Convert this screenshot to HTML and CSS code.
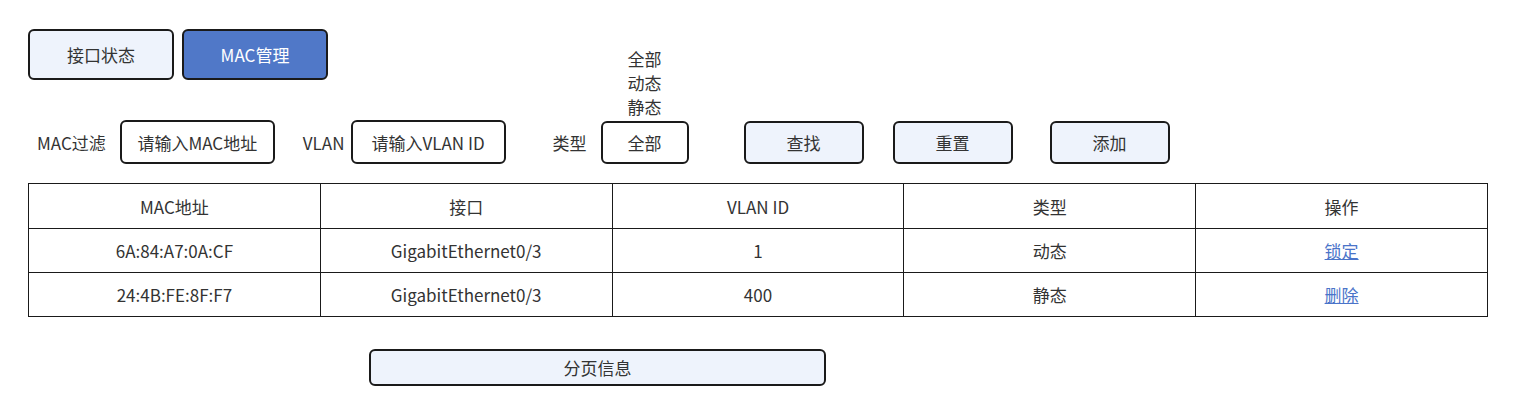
FILE: index.html
```html
<!DOCTYPE html>
<html lang="zh-CN">
<head>
    <meta charset="UTF-8">
    <meta name="viewport" content="width=device-width, initial-scale=1.0">
    <title>MAC管理</title>
    <link rel="stylesheet" href="styles.css">
</head>
<body>
    <div class="page">
        <div class="tabs">
            <button class="tab">接口状态</button>
            <button class="tab tab-active">MAC管理</button>
        </div>

        <div class="filters">
            <label class="filter-label label-mac">MAC过滤</label>
            <input type="text" class="filter-input" placeholder="请输入MAC地址">
            <label class="filter-label label-vlan">VLAN</label>
            <input type="text" class="filter-input" placeholder="请输入VLAN ID">
            <label class="filter-label label-type">类型</label>
            <div class="select-wrap">
                <ul class="select-options">
                    <li>全部</li>
                    <li>动态</li>
                    <li>静态</li>
                </ul>
                <div class="select-box">全部</div>
            </div>
            <button class="btn btn-search">查找</button>
            <button class="btn btn-reset">重置</button>
            <button class="btn btn-add">添加</button>
        </div>

        <table class="mac-table">
            <thead>
                <tr>
                    <th>MAC地址</th>
                    <th>接口</th>
                    <th>VLAN ID</th>
                    <th>类型</th>
                    <th>操作</th>
                </tr>
            </thead>
            <tbody>
                <tr>
                    <td>6A:84:A7:0A:CF</td>
                    <td>GigabitEthernet0/3</td>
                    <td>1</td>
                    <td>动态</td>
                    <td><a href="#" class="action-link">锁定</a></td>
                </tr>
                <tr>
                    <td>24:4B:FE:8F:F7</td>
                    <td>GigabitEthernet0/3</td>
                    <td>400</td>
                    <td>静态</td>
                    <td><a href="#" class="action-link">删除</a></td>
                </tr>
            </tbody>
        </table>

        <div class="pager">分页信息</div>
    </div>
</body>
</html>
```

FILE: styles.css
```css
:root {
    --text-color: #333;
    --border-color: #1a1a1a;
    --light-bg: #eef3fc;
    --primary-color: #5078c8;
    --link-color: #4a74c9;
}

body {
    font-family: 'Noto Sans CJK SC', 'Noto Sans', sans-serif;
    font-size: 17px;
    color: var(--text-color);
    margin: 0;
    background: white;
}

.page {
    padding: 29px 42px 0 28px;
}

.tabs {
    display: flex;
    gap: 8px;
}

.tab {
    width: 146px;
    height: 51px;
    border: 2px solid var(--border-color);
    border-radius: 6px;
    background: var(--light-bg);
    color: var(--text-color);
    font-family: inherit;
    font-size: 17px;
    padding: 0;
}

.tab-active {
    background: var(--primary-color);
    color: white;
}

.filters {
    display: flex;
    align-items: center;
    height: 44px;
    margin-top: 40px;
}

.filter-label {
    white-space: nowrap;
}

.label-mac {
    margin-left: 9px;
    margin-right: 14px;
}

.label-vlan {
    margin-left: 28px;
    margin-right: 6px;
}

.label-type {
    margin-left: 47px;
    margin-right: 14px;
}

.filter-input {
    width: 155px;
    height: 44px;
    box-sizing: border-box;
    border: 2px solid var(--border-color);
    border-radius: 6px;
    font-family: inherit;
    font-size: 17px;
    text-align: center;
    padding: 0;
    color: var(--text-color);
}

.filter-input::placeholder {
    color: var(--text-color);
    opacity: 1;
}

.select-wrap {
    position: relative;
}

.select-options {
    position: absolute;
    bottom: 100%;
    left: 0;
    right: 0;
    margin: 0 0 2px 0;
    padding: 0;
    list-style: none;
    text-align: center;
    line-height: 24px;
}

.select-box {
    width: 88px;
    height: 43px;
    box-sizing: border-box;
    border: 2px solid var(--border-color);
    border-radius: 6px;
    display: flex;
    align-items: center;
    justify-content: center;
}

.btn {
    width: 120px;
    height: 43px;
    border: 2px solid var(--border-color);
    border-radius: 6px;
    background: var(--light-bg);
    color: var(--text-color);
    font-family: inherit;
    font-size: 17px;
    padding: 0;
}

.btn-search {
    margin-left: 55px;
}

.btn-reset {
    margin-left: 29px;
}

.btn-add {
    margin-left: 37px;
}

.mac-table {
    width: 1460px;
    margin-top: 19px;
    border-collapse: collapse;
    table-layout: fixed;
    font-size: 17px;
}

.mac-table th,
.mac-table td {
    border: 1px solid var(--border-color);
    text-align: center;
    font-weight: normal;
    padding: 0;
    height: 43px;
}

.mac-table th {
    height: 44px;
}

.action-link {
    color: var(--link-color);
}

.pager {
    width: 457px;
    height: 37px;
    box-sizing: border-box;
    margin: 32px 0 0 341px;
    border: 2px solid var(--border-color);
    border-radius: 6px;
    background: var(--light-bg);
    display: flex;
    align-items: center;
    justify-content: center;
}
```
